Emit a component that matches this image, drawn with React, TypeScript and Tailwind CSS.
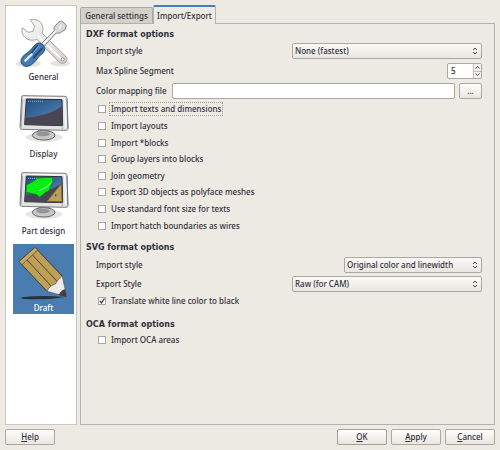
import { useState } from 'react';
import type { ReactNode } from 'react';

function ToolsIcon() {
  return (
    <svg viewBox="0 0 183 174" className="h-[58px] w-[61px]" aria-hidden="true">
      <defs>
        <linearGradient id="steel" x1="0" y1="0" x2="1" y2="1">
          <stop offset="0" stopColor="#fafaf8" />
          <stop offset="1" stopColor="#d2d0cc" />
        </linearGradient>
      </defs>
      <ellipse cx="46" cy="152" rx="38" ry="10" fill="#e6e3de" />
      <ellipse cx="142" cy="151" rx="30" ry="9" fill="#e6e3de" />
      <path
        d="M52 20 C68 16 84 24 88 38 C91 47 89 54 87 60 L158 130 C165 138 162 147 154 150 C147 153 141 150 137 146 L72 79 C60 84 45 82 36 73 C27 65 25 54 28 44 L46 58 L60 55 L65 40 Z"
        fill="url(#steel)"
        stroke="#a5a39f"
        strokeWidth="3"
        strokeLinejoin="round"
      />
      <path d="M75 68 L146 139" stroke="#ffffff" strokeWidth="5" />
      <circle cx="149" cy="139" r="5" fill="#fff" stroke="#96948f" strokeWidth="3" />
      <path d="M146 24 L160 36 L157 50 L138 61 L130 60 L94 99 L86 91 L124 53 L123 43 L137 27 Z" fill="#d8d7d4" stroke="#85878b" strokeWidth="3" strokeLinejoin="round" />
      <path d="M138 47 L145 36 M129 53 L91 93" stroke="#fafafa" strokeWidth="4" />
      <path
        d="M73 91 C82 85 99 101 95 111 C91 124 78 126 72 138 C64 150 50 161 38 160 C27 158 22 149 25 139 C29 126 43 121 51 113 C60 105 62 96 73 91 Z"
        fill="#4479b2"
        stroke="#25496f"
        strokeWidth="3"
      />
      <path d="M73 98 L50 126 M87 107 L62 134" stroke="#1f4470" strokeWidth="5" strokeLinecap="round" />
      <path d="M37 143 L56 124" stroke="#dce8f3" strokeWidth="7" strokeLinecap="round" />
      <path d="M78 99 L59 121" stroke="#94b8db" strokeWidth="3" />
    </svg>
  );
}

function MonitorIcon({ id, children }: { id: string; children?: ReactNode }) {
  return (
    <svg viewBox="0 0 183 174" className="h-[58px] w-[61px]" aria-hidden="true">
      <defs>
        <linearGradient id={id} x1="0" y1="0" x2="0.8" y2="1">
          <stop offset="0" stopColor="#1f4a7d" />
          <stop offset="1" stopColor="#5b8abb" />
        </linearGradient>
      </defs>
      <ellipse cx="93" cy="142" rx="55" ry="14" fill="#e9e6e1" />
      <path d="M74 118 L111 118 L109 134 L76 134 Z" fill="#a9a8a6" />
      <ellipse cx="92" cy="136" rx="34" ry="14" fill="#c9c8c5" stroke="#5c6470" strokeWidth="3" />
      <ellipse cx="90" cy="132" rx="20" ry="7" fill="#92969b" />
      <path d="M30 17 L156 19 Q161 19 162 25 L165 115 Q165 121 159 121 L26 118 Q21 118 21 112 L26 21 Q26 17 30 17 Z" fill="#e5e3df" stroke="#7b7c7f" strokeWidth="3" />
      <path d="M162 27 L165 116 M24 112 L28 28" stroke="#53799f" strokeWidth="2" />
      <path d="M32 22 L155 24 L158 113" fill="none" stroke="#fff" strokeWidth="3" />
      <path d="M40 27 L147 29 L149 107 L35 104 Z" fill={`url(#${id})`} stroke="#272e3c" strokeWidth="3" />
      <path d="M36 83 Q103 80 148 48 L149 107 L35 104 Z" fill="#484653" />
      <path d="M45 34 L92 34" stroke="#9ab4cf" strokeWidth="3" strokeDasharray="3 3" />
      <circle cx="148" cy="114" r="2" fill="#6b8d5e" />
      {children}
    </svg>
  );
}

function PartShapes() {
  return (
    <>
      <path d="M145 50 L147 104 L102 103 Z" fill="#bba05b" stroke="#6b5930" strokeWidth="2" />
      <path d="M126 82 L130 82 L130 88 L126 88 Z" fill="#484653" />
      <path d="M40 54 L61 43 L75 33 L119 31 L119 44 L108 71 L99 75 L80 91 L72 83 L39 76 Z" fill="#08ee12" stroke="#156d22" strokeWidth="2" />
      <path d="M78 71 Q103 62 116 45" fill="none" stroke="#b5ffb9" strokeWidth="3" />
    </>
  );
}

function PencilIcon() {
  return (
    <svg viewBox="0 0 183 174" className="h-[58px] w-[61px]" aria-hidden="true">
      <path d="M26 160 Q90 153 155 159 Q100 170 26 164 Z" fill="#26323f" />
      <path d="M66 10 L148 97 Q146 113 128 119 Q120 134 102 142 L18 53 Z" fill="#bd9f55" stroke="#3b3a40" strokeWidth="3" strokeLinejoin="round" />
      <path d="M33 38 L117 129 M50 24 L134 114" stroke="#4c432f" strokeWidth="3" />
      <path d="M18 53 L66 10 L74 18 L27 62 Z" fill="#c9aa5d" stroke="#3b3a40" strokeWidth="2" />
      <path d="M148 97 L161 158 L102 142 Q110 124 128 119 Q136 102 148 97 Z" fill="#eeece8" stroke="#55535a" strokeWidth="2" />
      <path d="M157 136 L161 160 L137 153 Q144 138 157 136 Z" fill="#403e4b" />
    </svg>
  );
}

const categories = [
  { name: 'General', icon: <ToolsIcon /> },
  { name: 'Display', icon: <MonitorIcon id="display-screen" /> },
  { name: 'Part design', icon: <MonitorIcon id="part-screen"><PartShapes /></MonitorIcon> },
  { name: 'Draft', icon: <PencilIcon /> },
];

function Check({ label, checked = false, focused = false }: { label: string; checked?: boolean; focused?: boolean }) {
  return (
    <label className="ml-3 flex items-center gap-1">
      <input
        type="checkbox"
        defaultChecked={checked}
        className="peer size-2 shrink-0 appearance-none border border-[#aaa8a2] bg-white"
      />
      <svg viewBox="0 0 8 8" className="invisible -ml-3 size-2 shrink-0 peer-checked:visible" aria-hidden="true">
        <path d="M2 4 L3.5 6 L6.5 1.5" fill="none" stroke="#33333f" strokeWidth="1.3" />
      </svg>
      <span className={focused ? 'px-px outline outline-dotted outline-[#a5a39d]' : 'px-px'}>{label}</span>
    </label>
  );
}

function Choice({ id, label, value, narrow = false }: { id: string; label: string; value: string; narrow?: boolean }) {
  return (
    <div className="flex h-4 items-center justify-between pl-[10px]">
      <label htmlFor={id}>{label}</label>
      <div className={narrow ? 'grid w-[138px]' : 'grid w-[190px]'}>
        <select
          id={id}
          className="col-start-1 row-start-1 h-4 w-full appearance-none rounded-xs border border-[#aaa8a1] bg-linear-to-b from-[#fbfaf8] to-[#e9e6e0] px-0.5 leading-3"
        >
          <option>{value}</option>
        </select>
        <svg viewBox="0 0 6 8" className="pointer-events-none col-start-1 row-start-1 mr-1 h-2 w-1.5 self-center justify-self-end" aria-hidden="true">
          <path d="M1 3 L3 1 L5 3 M1 5 L3 7 L5 5" fill="none" stroke="#454550" />
        </svg>
      </div>
    </div>
  );
}

function Heading({ children }: { children: ReactNode }) {
  return <h2 className="font-['DejaVu_Sans',sans-serif] leading-3 font-bold">{children}</h2>;
}

function PushButton({ label, isDefault = false }: { label: string; isDefault?: boolean }) {
  return (
    <button
      type="button"
      className={`h-4 w-[50px] rounded-xs border bg-linear-to-b from-[#fefefc] to-[#e9e6e0] leading-3 ${isDefault ? 'border-[#a3a18f]' : 'border-[#aaa8a1]'}`}
    >
      <span className="underline">{label[0]}</span>
      {label.slice(1)}
    </button>
  );
}

export default function App() {
  const [category, setCategory] = useState('Draft');
  return (
    <div className="flex min-h-screen flex-col bg-[#edeae4] p-[5px] font-['Noto_Sans','DejaVu_Sans',sans-serif] text-[8px] leading-3 font-medium text-[#30303b]">
      <div className="flex flex-1 gap-[3px]">
        <nav className="flex w-[72px] shrink-0 flex-col gap-[7px] border border-[#cbc8c1] bg-white px-[7px] pt-[7px]">
          {categories.map((c) => (
            <button
              key={c.name}
              type="button"
              onClick={() => setCategory(c.name)}
              className={`flex h-[70px] w-[61px] shrink-0 flex-col items-center ${category === c.name ? 'bg-[#4a7cb0] text-white' : ''}`}
            >
              {c.icon}
              <span className="whitespace-nowrap">{c.name}</span>
            </button>
          ))}
        </nav>
        <main className="flex min-w-0 flex-1 flex-col">
          <div role="tablist" className="flex items-end">
            <button type="button" role="tab" aria-selected="false" className="h-4 w-[73px] rounded-t-xs border border-b-0 border-[#aaa8a1] bg-[#d3d0c8] whitespace-nowrap">
              General settings
            </button>
            <button type="button" role="tab" aria-selected="true" className="z-10 -mb-px h-[19px] w-[63px] rounded-t-xs border border-t-2 border-b-0 border-[#b4b2ac] border-t-[#4a7cb0] bg-[#edeae4] whitespace-nowrap">
              Import/Export
            </button>
          </div>
          <section className="flex-1 border border-[#b4b2ac] pt-[5px] pr-3 pl-[5px]">
            <Heading>DXF format options</Heading>
            <div className="mt-0.5 flex flex-col gap-1">
              <Choice id="dxf-import" label="Import style" value="None (fastest)" />
              <div className="flex h-4 items-center justify-between pl-[10px]">
                <label htmlFor="spline">Max Spline Segment</label>
                <div className="flex h-4 w-[35px] rounded-xs border border-[#aaa8a1] bg-white">
                  <input id="spline" type="text" inputMode="numeric" defaultValue="5" className="w-full min-w-0 flex-1 px-[3px] leading-3" />
                  <div className="flex w-2 flex-col border-l border-[#c2bfb8] bg-[#f1efeb]">
                    <button type="button" aria-label="Increase" className="flex flex-1 items-center justify-center border-b border-[#c2bfb8]">
                      <svg viewBox="0 0 5 3" className="h-[3px] w-[5px]" aria-hidden="true"><path d="M.5 2.5 L2.5 .5 L4.5 2.5" fill="none" stroke="#454550" /></svg>
                    </button>
                    <button type="button" aria-label="Decrease" className="flex flex-1 items-center justify-center">
                      <svg viewBox="0 0 5 3" className="h-[3px] w-[5px]" aria-hidden="true"><path d="M.5 .5 L2.5 2.5 L4.5 .5" fill="none" stroke="#454550" /></svg>
                    </button>
                  </div>
                </div>
              </div>
              <div className="flex h-4 items-center gap-1 pl-[10px]">
                <label htmlFor="mapping" className="w-[72px] shrink-0 whitespace-nowrap">Color mapping file</label>
                <input id="mapping" type="text" className="h-4 min-w-0 flex-1 rounded-xs border border-[#aaa8a1] bg-white px-1" />
                <button type="button" className="h-4 w-[23px] rounded-xs border border-[#aaa8a1] bg-linear-to-b from-[#fefefc] to-[#e9e6e0] leading-3">...</button>
              </div>
            </div>
            <div className="mt-0.5 grid h-[133px] auto-rows-fr">
              <Check label="Import texts and dimensions" focused />
              <Check label="Import layouts" />
              <Check label="Import *blocks" />
              <Check label="Group layers into blocks" />
              <Check label="Join geometry" />
              <Check label="Export 3D objects as polyface meshes" />
              <Check label="Use standard font size for texts" />
              <Check label="Import hatch boundaries as wires" />
            </div>
            <div className="mt-2 flex flex-col gap-[3px]">
              <Heading>SVG format options</Heading>
              <Choice id="svg-import" label="Import style" value="Original color and linewidth" narrow />
              <Choice id="svg-export" label="Export Style" value="Raw (for CAM)" />
              <Check label="Translate white line color to black" checked />
            </div>
            <div className="mt-3 flex flex-col gap-[3px]">
              <Heading>OCA format options</Heading>
              <Check label="Import OCA areas" />
            </div>
          </section>
        </main>
      </div>
      <footer className="mt-1 flex gap-1">
        <div className="flex-1"><PushButton label="Help" /></div>
        <PushButton label="OK" isDefault />
        <PushButton label="Apply" />
        <PushButton label="Cancel" />
      </footer>
    </div>
  );
}
